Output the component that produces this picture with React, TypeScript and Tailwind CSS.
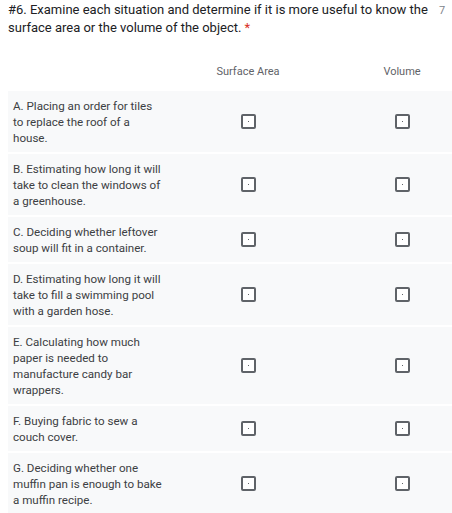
const rows = [
  'A. Placing an order for tiles to replace the roof of a house.',
  'B. Estimating how long it will take to clean the windows of a greenhouse.',
  'C. Deciding whether leftover soup will fit in a container.',
  'D. Estimating how long it will take to fill a swimming pool with a garden hose.',
  'E. Calculating how much paper is needed to manufacture candy bar wrappers.',
  'F. Buying fabric to sew a couch cover.',
  'G. Deciding whether one muffin pan is enough to bake a muffin recipe.',
];

function Box() {
  return (
    <span className="flex h-[15px] w-[15px] items-center justify-center rounded-[2px] border-2 border-[#5f6368] bg-white">
      <span className="h-px w-px bg-[#5f6368]" />
    </span>
  );
}

export default function App() {
  return (
    <div className="h-[513px] w-[452px] overflow-hidden bg-white font-['Roboto',sans-serif] text-[#202124]">
      <div className="flex pl-2 pt-px">
        <p className="flex-1 text-[13px] leading-[18px]">
          #6. Examine each situation and determine if it is more useful to know the surface area or the volume of the
          object. <span className="text-[#d93025]">*</span>
        </p>
        <span className="w-[13px] pt-[1px] text-[11px] leading-[18px] text-[#80868b]">7</span>
      </div>

      <div className="mt-[27px] flex w-[480px] pl-2 text-[11px] leading-4 text-[#5f6368]">
        <div className="w-[163px]" />
        <div className="w-[154px] text-center">Surface Area</div>
        <div className="w-[154px] text-center">Volume</div>
      </div>

      <div className="mt-[11px] flex w-[480px] flex-col gap-[2px] pl-2">
        {rows.map((label) => (
          <div key={label} className="flex items-center bg-[#f8f9fa]">
            <div className="w-[163px] pb-[6px] pl-[5px] pr-2 pt-[7px] text-[11.6px] leading-4 text-[#3c4043]">
              {label}
            </div>
            <div className="flex w-[154px] justify-center">
              <Box />
            </div>
            <div className="flex w-[154px] justify-center">
              <Box />
            </div>
          </div>
        ))}
      </div>
    </div>
  );
}
